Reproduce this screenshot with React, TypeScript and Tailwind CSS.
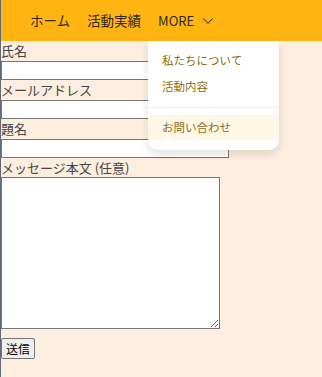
import { ChevronDown } from 'lucide-react'

const font = { fontFamily: '"Noto Sans CJK JP", "Noto Sans", sans-serif' }

export default function App() {
  return (
    <div className="relative min-h-screen bg-[#fdeedf] border-l border-[#5f6b78] text-[#444]" style={font}>
      <header className="h-[41px] bg-[#ffb412] flex items-center pl-[29px] gap-[17px] text-[13.5px] text-[#2f2a22]">
        <span>ホーム</span>
        <span>活動実績</span>
        <span className="flex items-center gap-[5px] text-[13px]">
          MORE
          <ChevronDown size={18} strokeWidth={1.4} />
        </span>
      </header>

      <form className="flex flex-col items-start text-[13px]">
        <label className="leading-[20px]">氏名</label>
        <input className="w-[228px] h-[19px] border border-[#767676] bg-white" />
        <label className="leading-[20px]">メールアドレス</label>
        <input className="w-[228px] h-[19px] border border-[#767676] bg-white" />
        <label className="leading-[20px]">題名</label>
        <input className="w-[228px] h-[19px] border border-[#767676] bg-white" />
        <label className="leading-[19px]">メッセージ本文 (任意)</label>
        <textarea className="w-[219px] h-[152px] border border-[#767676] bg-white resize" />
        <button
          type="button"
          className="mt-[9px] w-[34px] h-[21px] border border-[#767676] bg-[#efefef] rounded-[2px] text-[12px] leading-none text-black"
        >
          送信
        </button>
      </form>

      <div className="absolute top-[41px] left-[147px] w-[131px] bg-white rounded-b-[10px] shadow-[0_4px_10px_rgba(0,0,0,0.12)] text-[11.5px] text-[#8f6b12] pt-[7px] pb-[10px]">
        <div className="px-[14px] h-[26px] flex items-center">私たちについて</div>
        <div className="px-[14px] h-[26px] flex items-center">活動内容</div>
        <div className="my-[7px] h-[1px] bg-[#fbefdc]" />
        <div className="px-[14px] h-[25px] flex items-center bg-[#fff7e6]">お問い合わせ</div>
      </div>
    </div>
  )
}
